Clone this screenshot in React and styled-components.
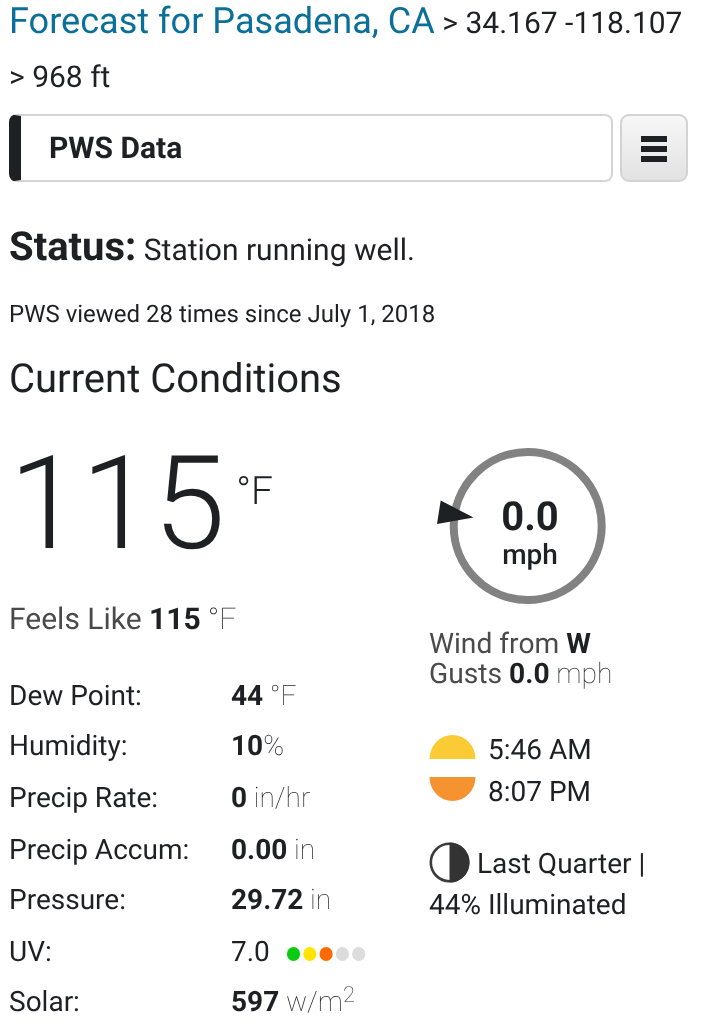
import React from "react";
import styled, { createGlobalStyle, css } from "styled-components";

const GlobalStyle = createGlobalStyle`
  * {
    box-sizing: border-box;
  }

  body {
    margin: 0;
    background: #ffffff;
    color: #1e2023;
    font-family: Roboto, "Liberation Sans", sans-serif;
    font-size: 30px;
    text-rendering: geometricPrecision;
  }
`;

const Wrapper = styled.main`
  width: 710px;
  height: 1024px;
  overflow: hidden;
  padding: 0 22px 0 9px;
  will-change: transform;
`;

const Title = styled.h1`
  margin: 0 -20px 0 0;
  height: 114px;
  font-size: 30px;
  font-weight: 400;
`;

const TitleLine = styled.span`
  display: block;
  height: ${(props) => props.height}px;
  line-height: 43px;
  white-space: nowrap;
`;

const TitleLink = styled.a`
  color: #0b7099;
  font-size: 36.1px;
`;

const Bar = styled.div`
  display: flex;
  gap: 7px;
  height: 68px;
`;

const Tab = styled.div`
  flex: 1;
  display: flex;
  border: 2px solid #d5d5d5;
  border-left: 12px solid #1e2023;
  border-radius: 8px;
  padding-left: 28px;
  font-weight: 700;
  line-height: 65px;
`;

const MenuButton = styled.button`
  width: 68px;
  display: flex;
  flex-direction: column;
  justify-content: center;
  align-items: center;
  gap: 4px;
  padding: 2px 0 0;
  border: 2px solid #d3d3d3;
  border-radius: 9px;
  background: linear-gradient(#f7f7f7, #e2e2e2);
`;

const MenuLine = styled.span`
  width: 26px;
  height: 6px;
  background: #1e2023;
`;

const Status = styled.p`
  margin: 35px 0 0;
  line-height: 60px;

  strong {
    font-size: 40px;
  }
`;

const Viewed = styled.p`
  margin: 13px 0 0;
  font-size: 24px;
  line-height: 40px;
`;

const SectionTitle = styled.h2`
  margin: 20px 0 0;
  font-size: 40px;
  font-weight: 400;
  line-height: 50px;
`;

const Columns = styled.div`
  display: grid;
  grid-template-columns: 420px 1fr;
  font-size: 28px;
`;

const Temperature = styled.div`
  display: flex;
  align-items: flex-start;
  height: 199px;
  padding-top: 20px;
  font-size: 130px;
  font-weight: 300;
  line-height: 160px;
`;

const Degree = styled.span`
  margin: 47px 0 0 11px;
  font-size: 39px;
  line-height: 40px;
`;

const FeelsLike = styled.p`
  margin: 0;
  color: #4a4a4a;
  font-size: 30px;
  line-height: 34px;
`;

const Value = styled.strong`
  color: #1e2023;
  font-weight: 700;

  ${(props) =>
    props.$regular &&
    css`
      font-weight: 400;
    `}
`;

const Unit = styled.span`
  color: #1e2023;
  font-weight: 100;

  sup {
    font-size: 22px;
    line-height: 0;
    vertical-align: 9px;
  }
`;

const Table = styled.div`
  margin-top: 34px;
`;

const Row = styled.div`
  display: grid;
  grid-template-columns: 222px 1fr;
  height: ${(props) => props.height}px;
  line-height: 50px;
`;

const Cell = styled.div`
  white-space: nowrap;
`;

const Dots = styled.svg`
  width: 80px;
  height: 16px;
  margin-left: 16px;
  vertical-align: -1px;
`;

const Side = styled.div`
  padding-top: 35px;
`;

const Dial = styled.div`
  position: relative;
  width: 180px;
  height: 190px;
`;

const DialRing = styled.svg`
  display: block;
  width: 180px;
  height: 176px;
`;

const DialText = styled.div`
  position: absolute;
  top: 57px;
  left: 23px;
  width: 156px;
  text-align: center;
  font-size: 28px;
  font-weight: 500;
  line-height: 34px;

  strong {
    display: block;
    font-size: 40px;
    font-weight: 700;
    line-height: 42px;
  }
`;

const Wind = styled.p`
  margin: 0;
  color: #4a4a4a;
  font-size: 28.2px;
  line-height: 30px;
`;

const Sun = styled.div`
  display: flex;
  align-items: center;
  gap: 12px;
  height: 42px;
  line-height: 42px;
`;

const SunTimes = styled.div`
  margin-top: 40px;
`;

const SunIcon = styled.svg`
  width: 47px;
  height: 42px;
`;

const Moon = styled.p`
  margin: 29px 0 0;
  line-height: 42px;

  svg {
    width: 41px;
    height: 41px;
    margin-right: 7px;
    vertical-align: -10px;
  }
`;

const MoonLine = styled.span`
  display: block;
  height: 42px;
  white-space: nowrap;
`;

const UvDots = () => (
  <Dots viewBox="0 0 80 16">
    {["#0acb12", "#ffe400", "#ff6a00", "#dcdcdc", "#dcdcdc"].map((color, i) => (
      <ellipse key={i} cx={7.5 + i * 16.3} cy="8" rx="6.6" ry="7.1" fill={color} />
    ))}
  </Dots>
);

const conditions = [
  { label: "Dew Point:", value: "44", unit: " °F", height: 50 },
  { label: "Humidity:", value: "10", unit: "%", height: 52 },
  { label: "Precip Rate:", value: "0", unit: " in/hr", height: 52 },
  { label: "Precip Accum:", value: "0.00", unit: " in", height: 50 },
  { label: "Pressure:", value: "29.72", unit: " in", height: 52 },
  { label: "UV:", value: "7.0", regular: true, extra: <UvDots />, height: 50 },
  {
    label: "Solar:",
    value: "597",
    unit: (
      <>
        {" "}
        w/m<sup>2</sup>
      </>
    ),
    height: 50,
  },
];

const App = () => {
  return (
    <Wrapper>
      <GlobalStyle />
      <Title>
        <TitleLine height={56}>
          <TitleLink>Forecast for Pasadena, CA</TitleLink> &gt; 34.167 -118.107
        </TitleLine>
        <TitleLine height={54}>&gt; 968 ft</TitleLine>
      </Title>
      <Bar>
        <Tab>PWS Data</Tab>
        <MenuButton aria-label="Menu">
          <MenuLine />
          <MenuLine />
          <MenuLine />
        </MenuButton>
      </Bar>
      <Status>
        <strong>Status:</strong> Station running well.
      </Status>
      <Viewed>PWS viewed 28 times since July 1, 2018</Viewed>
      <SectionTitle>Current Conditions</SectionTitle>
      <Columns>
        <div>
          <Temperature>
            115<Degree>°F</Degree>
          </Temperature>
          <FeelsLike>
            Feels Like <Value>115</Value>
            <Unit> °F</Unit>
          </FeelsLike>
          <Table>
            {conditions.map((item) => (
              <Row key={item.label} height={item.height}>
                <Cell>{item.label}</Cell>
                <Cell>
                  <Value $regular={item.regular}>{item.value}</Value>
                  {item.unit && <Unit>{item.unit}</Unit>}
                  {item.extra}
                </Cell>
              </Row>
            ))}
          </Table>
        </div>
        <Side>
          <Dial>
            <DialRing viewBox="0 0 180 176">
              <circle cx="98.7" cy="87" r="74" fill="none" stroke="#828282" strokeWidth="8" />
              <path d="M11.7 61.5 L44.5 78.5 L8 85 Z" fill="#1e2023" />
            </DialRing>
            <DialText>
              <strong>0.0</strong>
              mph
            </DialText>
          </Dial>
          <Wind>
            Wind from <Value>W</Value>
            <br />
            Gusts <Value>0.0</Value>
            <Unit> mph</Unit>
          </Wind>
          <SunTimes>
            <Sun>
              <SunIcon viewBox="0 0 47 42">
                <path d="M0.5 30 A23 24 0 0 1 46.5 30 Z" fill="#fbcb35" />
              </SunIcon>
              5:46 AM
            </Sun>
            <Sun>
              <SunIcon viewBox="0 0 47 42">
                <path d="M0.5 6 A23 24 0 0 0 46.5 6 Z" fill="#f59331" />
              </SunIcon>
              8:07 PM
            </Sun>
          </SunTimes>
          <Moon>
            <MoonLine>
              <svg viewBox="0 0 41 41">
                <circle cx="20.5" cy="20.5" r="18.7" fill="#ffffff" stroke="#3b3b3b" strokeWidth="2.6" />
                <path d="M20.5 0.5 A20 20 0 0 1 20.5 40.5 Z" fill="#333333" />
              </svg>
              Last Quarter |
            </MoonLine>
            <MoonLine>44% Illuminated</MoonLine>
          </Moon>
        </Side>
      </Columns>
    </Wrapper>
  );
};

export default App;
